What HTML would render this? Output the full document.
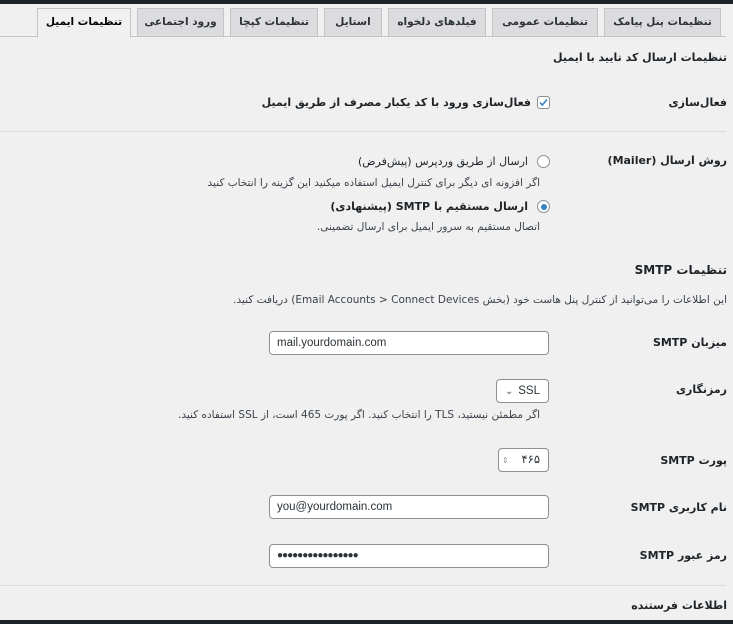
<!DOCTYPE html>
<html dir="rtl"><head><meta charset="utf-8"><style>
*{box-sizing:border-box;margin:0;padding:0}
body{width:733px;height:624px;background:#f0f0f1;position:relative;overflow:hidden;font-family:"DejaVu Sans","Liberation Sans",sans-serif;color:#1d2327;font-size:11px}
.a{position:absolute;white-space:nowrap}
.top{left:0;top:0;width:733px;height:4px;background:#1d2327}
.bot{left:0;top:620px;width:733px;height:4px;background:#1d2327}
.tab{position:absolute;top:8px;height:29px;background:#dcdcde;border:1px solid #c3c4c7;font-weight:bold;font-size:10.5px;color:#2c3338;text-align:center;line-height:27px}
.tab.on{background:#f0f0f1;border-bottom-color:#f0f0f1;color:#000;height:30px}
.line{position:absolute;left:0;top:36px;width:726px;height:1px;background:#c3c4c7}
.b{font-weight:bold}
.lbl{right:6px;font-weight:bold;font-size:11px}
.inp{position:absolute;background:#fff;border:1px solid #8c8f94;border-radius:4px;font-family:"Liberation Sans",sans-serif;font-size:11.5px;color:#2c3338;padding-left:7px;line-height:22px;direction:ltr;text-align:left}
.desc{color:#3c434a;font-size:10.5px}
.sep{position:absolute;height:1px;background:#dcdcde}
</style></head><body>
<div class="a top"></div>
<div class="line"></div>
<div class="tab" style="left:604px;width:117px">تنظیمات پنل پیامک</div>
<div class="tab" style="left:492px;width:106px">تنظیمات عمومی</div>
<div class="tab" style="left:388px;width:98px">فیلدهای دلخواه</div>
<div class="tab" style="left:324px;width:58px">استایل</div>
<div class="tab" style="left:230px;width:88px">تنظیمات کپچا</div>
<div class="tab" style="left:137px;width:87px">ورود اجتماعی</div>
<div class="tab on" style="left:37px;width:94px">تنظیمات ایمیل</div>

<div class="a b" style="right:6px;top:51px">تنظیمات ارسال کد تایید با ایمیل</div>

<div class="a lbl" style="top:96px">فعال‌سازی</div>
<div class="a" style="left:537px;top:96px;width:13px;height:13px;border:1px solid #8c8f94;border-radius:3px;background:#fff"><svg width="11" height="11" viewBox="0 0 11 11" style="position:absolute;left:0;top:0"><path d="M2 5.5l2.3 2.5L9 2.5" fill="none" stroke="#3582c4" stroke-width="1.6"/></svg></div>
<div class="a b" style="right:202px;top:96px">فعال‌سازی ورود با کد یکبار مصرف از طریق ایمیل</div>
<div class="sep" style="left:0;top:131px;width:726px"></div>

<div class="a lbl" style="top:154px">روش ارسال (Mailer)</div>
<div class="a" style="left:537px;top:155px;width:13px;height:13px;border:1px solid #8c8f94;border-radius:50%;background:#fff"></div>
<div class="a" style="right:205px;top:155px">ارسال از طریق وردپرس (پیش‌فرض)</div>
<div class="a desc" style="right:193px;top:177px">اگر افزونه ای دیگر برای کنترل ایمیل استفاده میکنید این گزینه را انتخاب کنید</div>
<div class="a" style="left:537px;top:200px;width:13px;height:13px;border:1px solid #8c8f94;border-radius:50%;background:#fff"><div style="position:absolute;left:2.5px;top:2.5px;width:6px;height:6px;border-radius:50%;background:#3582c4"></div></div>
<div class="a b" style="right:205px;top:200px">ارسال مستقیم با SMTP (پیشنهادی)</div>
<div class="a desc" style="right:193px;top:221px">اتصال مستقیم به سرور ایمیل برای ارسال تضمینی.</div>

<div class="a b" style="right:6px;top:263px;font-size:12px">تنظیمات SMTP</div>
<div class="a desc" style="right:6px;top:294px">این اطلاعات را می‌توانید از کنترل پنل هاست خود (بخش <span dir="ltr">Email Accounts &gt; Connect Devices</span>) دریافت کنید.</div>

<div class="a lbl" style="top:336px">میزبان SMTP</div>
<div class="inp" style="left:269px;top:331px;width:280px;height:24px">mail.yourdomain.com</div>

<div class="a lbl" style="top:383px">رمزنگاری</div>
<div class="inp" style="left:496px;top:379px;width:53px;height:24px;padding-left:8px"><span style="font-size:10px;color:#50575e">⌄</span><span style="position:absolute;right:8px">SSL</span></div>
<div class="a desc" style="right:193px;top:409px">اگر مطمئن نیستید، TLS را انتخاب کنید. اگر پورت 465 است، از SSL استفاده کنید.</div>

<div class="a lbl" style="top:454px">پورت SMTP</div>
<div class="inp" style="left:498px;top:448px;width:51px;height:24px;padding-left:3px"><span style="color:#999;font-size:8px">⇕</span><span style="position:absolute;right:8px">۴۶۵</span></div>

<div class="a lbl" style="top:501px">نام کاربری SMTP</div>
<div class="inp" style="left:269px;top:495px;width:280px;height:24px">you@yourdomain.com</div>

<div class="a lbl" style="top:549px">رمز عبور SMTP</div>
<div class="inp" style="left:269px;top:544px;width:280px;height:24px;font-size:10px;letter-spacing:-1px">●●●●●●●●●●●●●●●●</div>

<div class="sep" style="left:0;top:585px;width:726px"></div>
<div class="a lbl" style="top:599px">اطلاعات فرستنده</div>
<div class="a bot"></div>
</body></html>
